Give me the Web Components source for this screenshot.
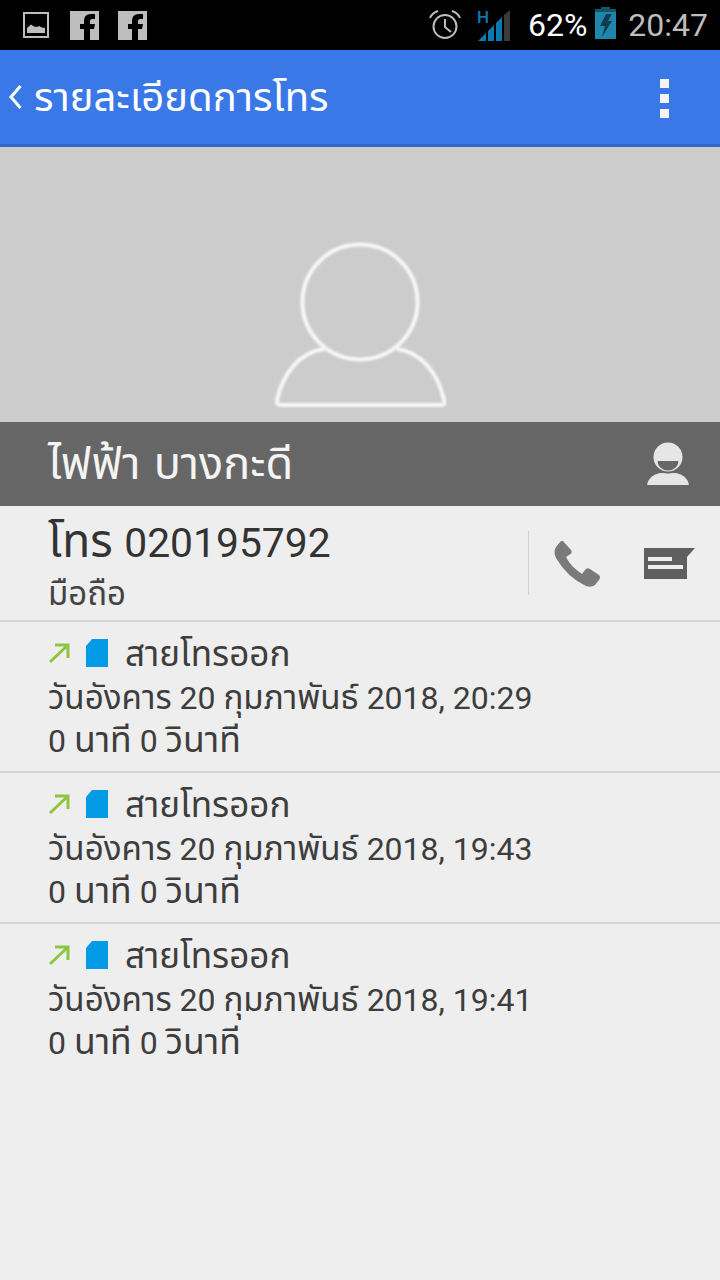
<!DOCTYPE html>
<html lang="th">
<head>
<meta charset="utf-8">
<title>รายละเอียดการโทร</title>
<style>
  html, body { margin: 0; padding: 0; }
  body {
    width: 720px;
    height: 1280px;
    overflow: hidden;
    background: #eeeeee;
    color: #333333;
    font-family: Roboto, "Noto Sans Thai", "Noto Sans", "DejaVu Sans", sans-serif;
  }
</style>
</head>
<body>
<status-bar></status-bar>
<app-bar title="รายละเอียดการโทร"></app-bar>
<contact-photo></contact-photo>
<name-bar name="ไฟฟ้า บางกะดี"></name-bar>
<number-row number="โทร 020195792" kind="มือถือ"></number-row>
<call-entry label="สายโทรออก" date="วันอังคาร 20 กุมภาพันธ์ 2018, 20:29" duration="0 นาที 0 วินาที"></call-entry>
<call-entry label="สายโทรออก" date="วันอังคาร 20 กุมภาพันธ์ 2018, 19:43" duration="0 นาที 0 วินาที"></call-entry>
<call-entry label="สายโทรออก" date="วันอังคาร 20 กุมภาพันธ์ 2018, 19:41" duration="0 นาที 0 วินาที"></call-entry>

<script>
// the thai glyphs on the phone are wider than the installed ones, so thai runs get their own span
function fillThai(el, text) {
  text.split(/([\u0E00-\u0E7F]+)/).forEach(part => {
    if (!part) return;
    if (/[\u0E00-\u0E7F]/.test(part)) {
      const s = document.createElement("span");
      s.className = "th";
      s.textContent = part;
      el.append(s);
    } else {
      el.append(part);
    }
  });
}

class StatusBar extends HTMLElement {
  constructor() {
    super();
    const root = this.attachShadow({mode: "open"});
    root.innerHTML = `<style>
      :host { display: flex; align-items: center; height: 50px; background: #000; padding: 0 12px 0 23px; box-sizing: border-box; }
      .left { display: flex; align-items: center; flex: 1; }
      .left svg + svg { margin-left: 19px; }
      .left svg:first-child { margin-right: 2px; }
      .right { display: flex; align-items: center; }
      svg { display: block; }
      .txt { font-size: 32px; line-height: 50px; }
      .pct { color: #fff; margin-left: 18px; }
      .time { color: #bdbdbd; margin-left: 12px; }
      .alarm { margin-right: 16px; }
      .batt { margin-left: 8px; margin-top: -4px; }
      .signal { position: relative; }
      .signal b { position: absolute; left: 0; top: -1px; font-size: 17px; line-height: 17px; font-weight: 500; color: #0b79b0; }
    </style>
    <div class="left">
      <svg width="26" height="26" viewBox="0 0 26 26">
        <rect x="1" y="1" width="24" height="24" fill="none" stroke="#bdbdbd" stroke-width="2"/>
        <path d="M4 21V16L8 12.500L11 14.500L14 15L16 14L19 15.500L22 16V21Z" fill="#bdbdbd"/>
      </svg>
      <svg width="29" height="29" viewBox="0 0 29 29">
        <path fill="#bdbdbd" d="M0 0H29V29H20V18H24L25 13H20V10Q20 8 22 8H25V3H21Q14 3 14 10V13H10V18H14V29H0Z"/>
      </svg>
      <svg width="29" height="29" viewBox="0 0 29 29">
        <path fill="#bdbdbd" d="M0 0H29V29H20V18H24L25 13H20V10Q20 8 22 8H25V3H21Q14 3 14 10V13H10V18H14V29H0Z"/>
      </svg>
    </div>
    <div class="right">
      <svg class="alarm" width="32" height="30" viewBox="0 0 32 30">
        <circle cx="16" cy="16.500" r="11.500" fill="none" stroke="#bdbdbd" stroke-width="2"/>
        <path d="M16 9V17L22 22" fill="none" stroke="#bdbdbd" stroke-width="2"/>
        <path d="M1 8Q3 3 9 1M23 1Q29 3 31 8" fill="none" stroke="#bdbdbd" stroke-width="2"/>
      </svg>
      <div class="signal">
        <b>H</b>
        <svg width="33" height="31" viewBox="0 0 33 31">
          <path d="M1 31L9 23V31Z" fill="#0b79b0"/>
          <path d="M11 21L17 15V31H11Z" fill="#0b79b0"/>
          <path d="M19 13L25 7V31H19Z" fill="#0b79b0"/>
          <path d="M27 5L33 0V31H27Z" fill="#3a3a3a"/>
        </svg>
      </div>
      <span class="txt pct">62%</span>
      <svg class="batt" width="21" height="32" viewBox="0 0 21 32">
        <path d="M6 0H15V2H21V32H0V2H6Z" fill="#1f86ab"/>
        <path d="M6 0H15V2H21V5H0V2H6Z" fill="#14556c"/>
        <path d="M11 7H17L13 14H17L7 30L10 19H5Z" fill="#0e3d4f"/>
      </svg>
      <span class="txt time">20:47</span>
    </div>`;
  }
}

class AppBar extends HTMLElement {
  constructor() {
    super();
    const root = this.attachShadow({mode: "open"});
    root.innerHTML = `<style>
      :host { display: flex; align-items: center; height: 97px; box-sizing: border-box; background: #3b78e7; border-bottom: 3px solid #3367c8; padding: 0 51px 0 8px; color: #fff; }
      svg { display: block; }
      h1 { flex: 1; margin: 0 0 0 11px; font-size: 40px; font-weight: 400; line-height: 94px; position: relative; top: 1px; }
      .menu { display: flex; flex-direction: column; gap: 6px; margin-top: 2px; }
      .menu i { display: block; width: 9px; height: 9px; background: #f5f5f5; }
    </style>
    <svg width="15" height="26" viewBox="0 0 15 26"><path d="M12.500 2L3 13L12.500 24" fill="none" stroke="#fff" stroke-width="3"/></svg>
    <h1></h1>
    <div class="menu"><i></i><i></i><i></i></div>`;
    root.querySelector("h1").textContent = this.title;
  }
  get title() { return this.getAttribute("title"); }
}

class ContactPhoto extends HTMLElement {
  constructor() {
    super();
    const root = this.attachShadow({mode: "open"});
    root.innerHTML = `<style>
      :host { display: flex; justify-content: center; align-items: flex-end; height: 275px; background: #cccccc; padding-bottom: 14px; box-sizing: border-box; }
      svg { display: block; }
    </style>
    <svg width="174" height="168" viewBox="0 0 174 168">
      <defs><filter id="soft" x="-5%" y="-5%" width="110%" height="110%"><feGaussianBlur stdDeviation="1"/></filter></defs>
      <g fill="none" stroke="#f8f8f8" stroke-width="4" stroke-linejoin="round" filter="url(#soft)">
        <circle cx="87" cy="62" r="57.500"/>
        <path d="M51 109C27 112 10 133 4 160Q3 165 8 165H168Q173 165 171 160C165 133 148 112 124 109"/>
      </g>
    </svg>`;
  }
}

class NameBar extends HTMLElement {
  constructor() {
    super();
    const root = this.attachShadow({mode: "open"});
    root.innerHTML = `<style>
      :host { display: flex; align-items: center; height: 84px; background: #666666; padding: 0 31px 0 48px; color: #f4f4f4; }
      div { flex: 1; font-size: 45px; line-height: 84px; word-spacing: 2px; }
      svg { display: block; }
    </style>
    <div></div>
    <svg width="42" height="44" viewBox="0 0 42 44">
      <path d="M0 43Q2 33 13 31H29Q40 33 42 43Z" fill="#e6e6e6"/>
      <circle cx="21" cy="15" r="16.500" fill="#666"/>
      <circle cx="21" cy="15" r="14.500" fill="#e6e6e6"/>
      <path d="M10.500 19H31.500A10.500 9.500 0 0 1 10.500 19Z" fill="#666"/>
    </svg>`;
    root.querySelector("div").textContent = this.getAttribute("name");
  }
}

class NumberRow extends HTMLElement {
  constructor() {
    super();
    const root = this.attachShadow({mode: "open"});
    root.innerHTML = `<style>
      :host { display: flex; align-items: center; height: 116px; box-sizing: border-box; border-bottom: 2px solid #d4d4d4; padding: 0 25px 0 48px; }
      .text { flex: 1; align-self: flex-start; }
      .num { font-size: 40.800px; line-height: 52px; color: #333; margin-top: 9px; word-spacing: 1.500px; }
      .num .th { font-size: 46px; }
      .kind { font-size: 33px; line-height: 42px; color: #444; margin-top: 4px; }
      .sep { width: 1px; height: 64px; background: #d0d0d0; margin-right: 25px; }
      svg { display: block; }
      .call { margin-right: 43px; margin-top: 2px; }
    </style>
    <div class="text"><div class="num"></div><div class="kind"></div></div>
    <div class="sep"></div>
    <svg class="call" width="47" height="47" viewBox="0 0 47 47">
      <path fill="#7a7a7a" d="M9 0L17 9Q19 12 15 14L12 16Q16 25 28 33L31 29Q33 26 36 28L45 34Q47 36 45 39L41 44Q37 47 32 45Q13 36 2 17Q-1 11 2 6L6 1Q8 -1 9 0Z"/>
    </svg>
    <svg width="51" height="31" viewBox="0 0 51 31">
      <path fill="#5f5f5f" d="M0 0H51L43 9V31H0Z"/>
      <rect x="4" y="9" width="24" height="4" fill="#eee"/>
      <rect x="4" y="17" width="35" height="4" fill="#eee"/>
    </svg>`;
    fillThai(root.querySelector(".num"), this.getAttribute("number"));
    root.querySelector(".kind").textContent = this.getAttribute("kind");
  }
}

class CallEntry extends HTMLElement {
  constructor() {
    super();
    const root = this.attachShadow({mode: "open"});
    root.innerHTML = `<style>
      :host { display: block; height: 151px; box-sizing: border-box; border-bottom: 2px solid #d4d4d4; padding: 11px 0 0 48px; font-size: 32px; color: #3d3d3d; }
      :host(:last-of-type) { border-bottom: none; }
      .top, .date, .dur { height: 43px; line-height: 43px; white-space: nowrap; }
      .top { display: flex; align-items: center; }
      .label { font-size: 35px; line-height: 43px; }
      .date .th { font-size: 33.200px; line-height: 43px; }
      .dur .th { font-size: 35.500px; line-height: 43px; }
      svg { display: block; }
      .arrow { margin-right: 16px; margin-top: -4px; }
      .sim { margin-right: 17px; margin-top: -4px; }
    </style>
    <div class="top">
      <svg class="arrow" width="22" height="22" viewBox="0 0 22 22"><path d="M2 20L20 3M7 3H20V16" fill="none" stroke="#8cc63f" stroke-width="3"/></svg>
      <svg class="sim" width="22" height="28" viewBox="0 0 22 28"><path d="M6 0H22V28H0V7Z" fill="#039be5"/></svg>
      <span class="label"></span>
    </div>
    <div class="date"></div>
    <div class="dur"></div>`;
    root.querySelector(".label").textContent = this.getAttribute("label");
    fillThai(root.querySelector(".date"), this.getAttribute("date"));
    fillThai(root.querySelector(".dur"), this.getAttribute("duration"));
  }
}

customElements.define("status-bar", StatusBar);
customElements.define("app-bar", AppBar);
customElements.define("contact-photo", ContactPhoto);
customElements.define("name-bar", NameBar);
customElements.define("number-row", NumberRow);
customElements.define("call-entry", CallEntry);
</script>
</body>
</html>
